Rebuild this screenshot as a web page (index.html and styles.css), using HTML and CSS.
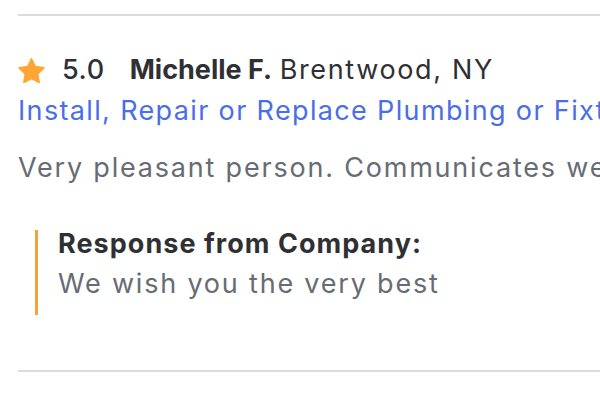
FILE: index.html
```html
<!DOCTYPE html>
<html lang="en">
<head>
<meta charset="utf-8">
<title>Review</title>
<link rel="stylesheet" href="styles.css">
</head>
<body>
<div class="review">
  <div class="head">
    <svg class="star" viewBox="2 2 20 19.2" width="27" height="25" aria-hidden="true"><path d="M12 2.6l2.95 6.02 6.6.96-4.78 4.66 1.13 6.58L12 17.72l-5.9 3.1 1.13-6.58-4.78-4.66 6.6-.96z" fill="#fda634" stroke="#fda634" stroke-width="1.2" stroke-linejoin="round"/></svg><span class="rating">5.0</span><span class="name">Michelle F.</span> <span class="place">Brentwood, NY</span>
  </div>
  <div class="service">Install, Repair or Replace Plumbing or Fixtures</div>
  <p class="text">Very pleasant person. Communicates well and is very responsive.</p>
  <div class="response">
    <div class="resp-title">Response from Company:</div>
    <div class="resp-body">We wish you the very best</div>
  </div>
</div>
</body>
</html>
```
FILE: styles.css
```css
html, body {
  margin: 0;
  padding: 0;
  background: #fff;
  overflow: hidden;
}
body {
  font-family: Inter, "Noto Sans", sans-serif;
  font-size: 27px;
  padding-top: 14px;
  padding-left: 18px;
}
.review {
  border-top: 2px solid #dcdcdc;
  border-bottom: 2px solid #dcdcdc;
  padding-top: 33px;
  padding-bottom: 55px;
  white-space: nowrap;
}
.head {
  line-height: 41px;
  color: #2f3033;
}
.star {
  vertical-align: -4px;
  margin-right: 17px;
}
.rating {
  font-weight: 500;
  letter-spacing: 0.6px;
  margin-right: 25px;
}
.name {
  font-weight: 700;
  letter-spacing: 0;
}
.place {
  letter-spacing: 1.65px;
}
.service {
  line-height: 41px;
  color: #4a6ee8;
  letter-spacing: 1.35px;
}
.text {
  margin: 16px 0 0;
  line-height: 41px;
  color: #676c72;
  letter-spacing: 1.8px;
}
.response {
  margin: 42px 0 0 17px;
  border-left: 3px solid #f7a33b;
  padding: 1px 0 18px 20px;
}
.resp-title {
  line-height: 26px;
  font-weight: 700;
  color: #2f3033;
  letter-spacing: 1.05px;
  margin-bottom: 14px;
}
.resp-body {
  line-height: 26px;
  color: #676c72;
  letter-spacing: 1.8px;
}
```
